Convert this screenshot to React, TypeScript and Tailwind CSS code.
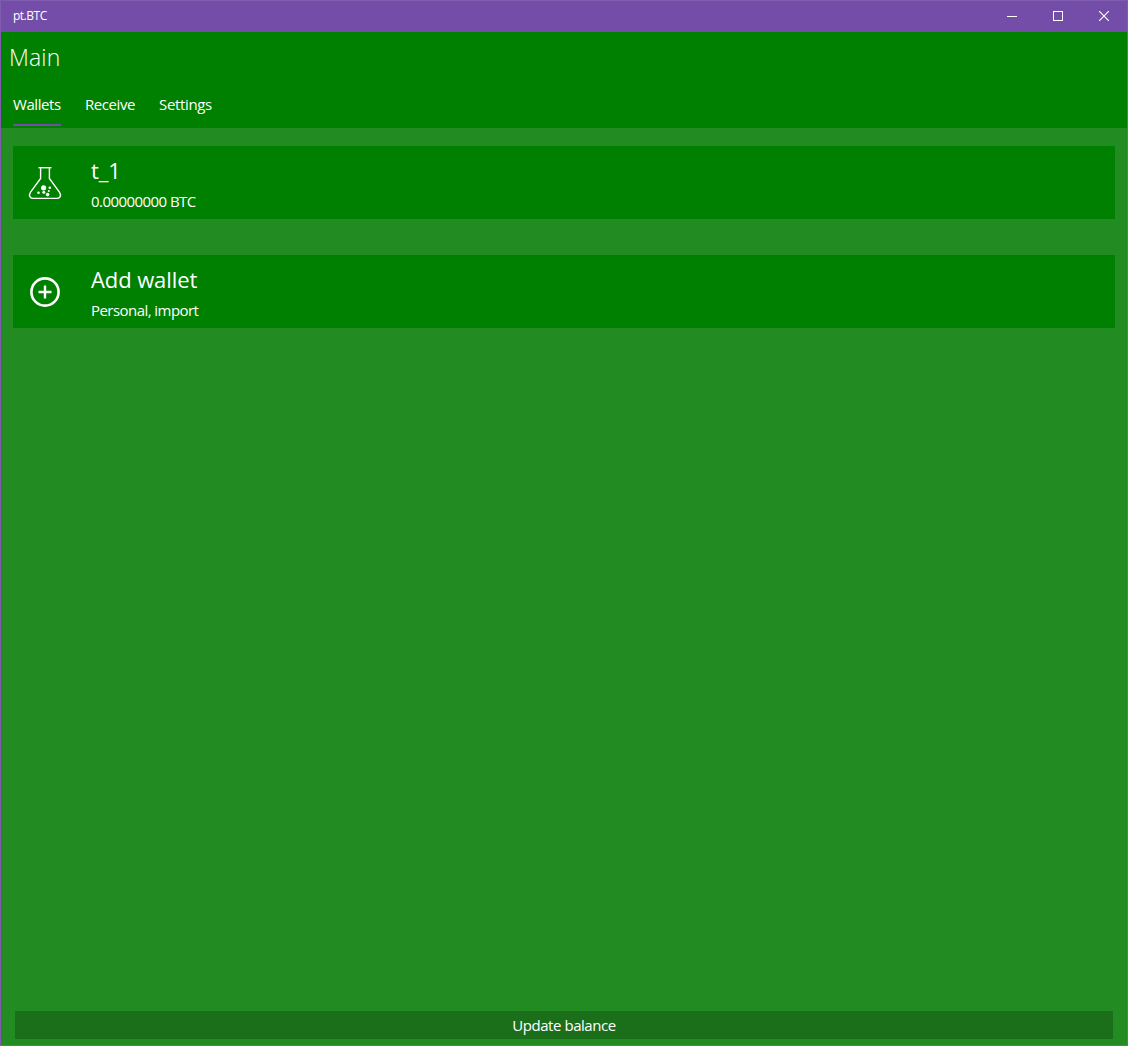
import type { ReactNode } from "react";

function FlaskIcon() {
  return (
    <svg width="34" height="34" viewBox="0 0 34 34" fill="none" stroke="#fff" strokeWidth="1.4">
      <path d="M10.5 1.7H23.5" />
      <path d="M12.6 2V12.5L2.4 26.3C0.6 29.4 1.6 32.4 5 32.4H29C32.4 32.4 33.4 29.4 31.6 26.3L21.4 12.5V2" />
      <g fill="#fff" stroke="none">
        <circle cx="15.6" cy="21.8" r="2.6" />
        <circle cx="21.8" cy="21.8" r="1.3" />
        <circle cx="10.5" cy="26.7" r="1.3" />
        <circle cx="15.8" cy="26.2" r="1.5" />
        <circle cx="20.8" cy="24.9" r="1" />
        <circle cx="19.6" cy="28.6" r="1.8" />
      </g>
    </svg>
  );
}

function AddIcon() {
  return (
    <svg width="34" height="34" viewBox="0 0 34 34" fill="none" stroke="#fff" strokeWidth="2.6">
      <circle cx="17" cy="17" r="13.6" />
      <path d="M10.5 17H23.5M17 10.5V23.5" strokeWidth="2.4" />
    </svg>
  );
}

function Row({ icon, title, detail }: { icon: ReactNode; title: ReactNode; detail: ReactNode }) {
  return (
    <button className="flex h-[73px] w-full bg-[#008000] text-left">
      <span className="ml-[15px] mt-5 block w-[63px] shrink-0">{icon}</span>
      <span className="flex flex-col pt-2">
        <span className="h-8 text-[22px] leading-8 tracking-[-0.1px]">{title}</span>
        <span className="mt-[5px] h-5 text-[15px] leading-5">{detail}</span>
      </span>
    </button>
  );
}

export default function App() {
  return (
    <div className="flex h-[1046px] w-[1128px] flex-col border border-[#7f5cb0] bg-[#228b22] font-['Open_Sans','Noto_Sans',sans-serif] whitespace-nowrap text-white">
      <header className="flex h-[31px] shrink-0 justify-between bg-[#744da9]">
        <span className="pl-3 text-[12px] leading-[29px] tracking-[-0.5px]">pt.BTC</span>
        <div className="flex">
          <button aria-label="Minimize" className="flex h-[30px] w-[46px] items-center justify-center">
            <svg width="10" height="10" shapeRendering="crispEdges"><path d="M0 5.5H10" stroke="#fff" /></svg>
          </button>
          <button aria-label="Maximize" className="flex h-[30px] w-[46px] items-center justify-center">
            <svg width="10" height="10" shapeRendering="crispEdges"><path d="M.5 .5H9.5V9.5H.5Z" fill="none" stroke="#fff" /></svg>
          </button>
          <button aria-label="Close" className="flex h-[30px] w-[46px] items-center justify-center">
            <svg width="10" height="10"><path d="M0 0L10 10M10 0L0 10" stroke="#fff" strokeWidth="1.2" /></svg>
          </button>
        </div>
      </header>
      <section className="flex h-24 shrink-0 flex-col justify-between bg-[#008000]">
        <h1 className="pl-2 pt-[9px] text-[23px] leading-8 font-[350] tracking-[0.15px]">Main</h1>
        <nav className="flex gap-6 pl-3 text-[15px] leading-5 tracking-[-0.42px]">
          <div className="h-[34px] w-12">
            <span>Wallets</span>
            <div className="mt-2.5 h-0.5 w-12 bg-[#744da9]" />
          </div>
          <span className="w-[50px]">Receive</span>
          <span className="tracking-[-0.35px]">Settings</span>
        </nav>
      </section>
      <main className="flex flex-1 flex-col px-3 pt-[18px]">
        <div className="flex flex-col gap-9">
          <Row icon={<FlaskIcon />} title="t_1" detail={<span className="tracking-[-0.55px]">0.00000000 BTC</span>} />
          <Row icon={<AddIcon />} title="Add wallet" detail={<span className="tracking-[-0.55px]">Personal, import</span>} />
        </div>
        <button className="mx-0.5 mt-auto mb-1.5 h-7 bg-[#1b6f1b] text-[15px] leading-7 tracking-[-0.45px]">Update balance</button>
      </main>
    </div>
  );
}
